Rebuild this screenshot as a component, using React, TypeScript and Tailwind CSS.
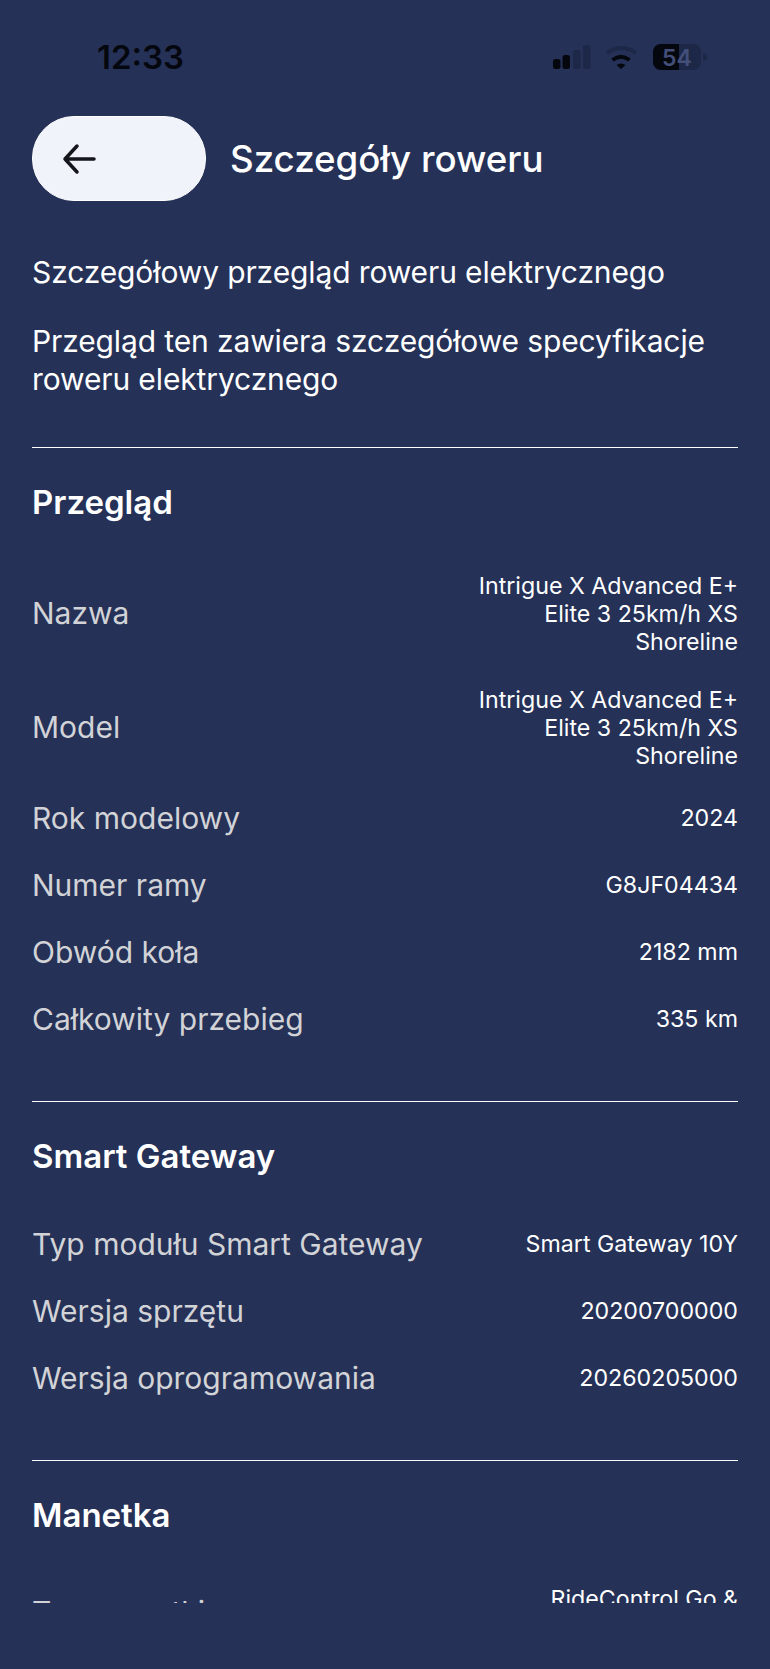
import React from 'react';

type Row = { label: string; value: string };

const overview: Row[] = [
  { label: 'Nazwa', value: 'Intrigue X Advanced E+ Elite 3 25km/h XS Shoreline' },
  { label: 'Model', value: 'Intrigue X Advanced E+ Elite 3 25km/h XS Shoreline' },
  { label: 'Rok modelowy', value: '2024' },
  { label: 'Numer ramy', value: 'G8JF04434' },
  { label: 'Obwód koła', value: '2182 mm' },
  { label: 'Całkowity przebieg', value: '335 km' },
];

const gateway: Row[] = [
  { label: 'Typ modułu Smart Gateway', value: 'Smart Gateway 10Y' },
  { label: 'Wersja sprzętu', value: '20200700000' },
  { label: 'Wersja oprogramowania', value: '20260205000' },
];

const shifter: Row[] = [
  { label: 'Typ manetki', value: 'RideControl Go & RideControl Ergo' },
];

const DetailRow = ({ label, value }: Row) => (
  <div className="flex items-center justify-between py-[15px]">
    <span className="text-[30px] leading-[37px] text-[#d2d3d6] shrink-0">{label}</span>
    <span className="text-[23.2px] leading-[28px] text-white text-right max-w-[270px]">{value}</span>
  </div>
);

const Section = ({ title, rows }: { title: string; rows: Row[] }) => (
  <section className="border-t border-white pt-[33px] pb-[48.5px]">
    <h2 className="text-[33px] leading-[42px] font-semibold text-white mb-[33.5px]">{title}</h2>
    {rows.map(r => <DetailRow key={r.label} {...r} />)}
  </section>
);

const StatusBar = () => (
  <div className="h-[116px] flex justify-between pt-[38px] pl-[97px] pr-[60px]">
    <span className="text-[33px] leading-[38px] font-semibold text-[#05070f]">12:33</span>
    <svg width="160" height="32" viewBox="0 0 160 32" className="mt-[2px]">
      <rect x="3" y="19" width="7.5" height="10" rx="2.5" fill="#05070f" />
      <rect x="12.5" y="15" width="7.5" height="14" rx="2.5" fill="#05070f" />
      <rect x="23" y="10" width="7.5" height="19" rx="2.5" fill="#1d2747" />
      <rect x="33" y="5" width="7.5" height="24" rx="2.5" fill="#1d2747" />
      <path d="M57 13Q71 3 86 13" fill="none" stroke="#1d2747" strokeWidth="4" />
      <path d="M62.5 20Q71 13.5 79.5 20" fill="none" stroke="#05070f" strokeWidth="4" />
      <path d="M66.5 25Q71 22 75.5 25L71 29z" fill="#05070f" />
      <rect x="103" y="4" width="48" height="26" rx="8" fill="#1d2747" />
      <path d="M111 4h18v26h-18a8 8 0 0 1-8-8v-10a8 8 0 0 1 8-8z" fill="#05070f" />
      <path d="M153 13a4 4 0 0 1 0 8z" fill="#1d2747" />
      <text x="127" y="25.5" textAnchor="middle" fontSize="23" fontWeight="600" fill="#434f78">54</text>
    </svg>
  </div>
);

export default function App() {
  return (
    <div className="w-[770px] h-[1669px] bg-[#253157] overflow-hidden" style={{ fontFamily: 'Inter, sans-serif' }}>
      <StatusBar />
      <div className="h-[1487px] overflow-hidden px-[32px]">
        <div className="flex items-center gap-[24px] h-[85px]">
          <button className="w-[174px] h-[85px] rounded-[42px] border border-white bg-[#f0f3fa] flex items-center pl-[29px] shrink-0">
            <svg width="34" height="34" viewBox="0 0 34 34" fill="none" stroke="#14161c" strokeWidth="3.5" strokeLinecap="round" strokeLinejoin="round">
              <path d="M32 17H3M15 4 3 17l12 13" />
            </svg>
          </button>
          <h1 className="text-[36.7px] font-medium text-white">Szczegóły roweru</h1>
        </div>
        <p className="mt-[52px] text-[30px] leading-[38px] tracking-[-0.12px] text-white">Szczegółowy przegląd roweru elektrycznego</p>
        <p className="mt-[31px] text-[30px] leading-[38px] tracking-[-0.12px] text-white">Przegląd ten zawiera szczegółowe specyfikacje roweru elektrycznego</p>
        <div className="mt-[49px]">
          <Section title="Przegląd" rows={overview} />
          <Section title="Smart Gateway" rows={gateway} />
          <Section title="Manetka" rows={shifter} />
        </div>
      </div>
    </div>
  );
}
